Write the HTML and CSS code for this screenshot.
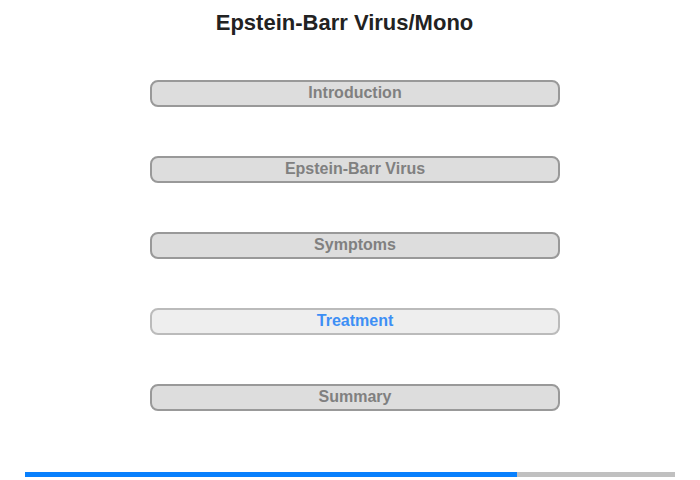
FILE: index.html
```html
<!DOCTYPE html>
<html>
<head>
<meta charset="utf-8">
<link rel="stylesheet" href="styles.css">
</head>
<body>
<div class="page">
  <h1 class="title">Epstein-Barr Virus/Mono</h1>
  <nav class="menu">
    <div class="item">Introduction</div>
    <div class="item">Epstein-Barr Virus</div>
    <div class="item">Symptoms</div>
    <div class="item active">Treatment</div>
    <div class="item">Summary</div>
  </nav>
  <div class="progress"><div class="fill" style="width:492px"></div></div>
</div>
</body>
</html>
```
FILE: styles.css
```css
html, body {
  margin: 0;
  padding: 0;
  background: #fff;
}
.page {
  width: 700px;
  height: 480px;
  display: flex;
  flex-direction: column;
  font-family: "Liberation Sans", Arial, sans-serif;
}
.title {
  margin: 0;
  padding: 10px 11px 0 0;
  font-size: 22px;
  line-height: 25px;
  font-weight: bold;
  color: #222;
  text-align: center;
}
.menu {
  margin: 45px 0 0 150px;
  width: 410px;
  display: flex;
  flex-direction: column;
  gap: 49px;
}
.item {
  box-sizing: border-box;
  height: 27px;
  border: 2px solid #999;
  border-radius: 8px;
  background: #ddd;
  color: #808080;
  font-size: 16px;
  font-weight: bold;
  line-height: 22px;
  text-align: center;
}
.item.active {
  border-color: #bbb;
  background: #eee;
  color: #3d8ff5;
}
.progress {
  margin: 61px 0 0 25px;
  width: 650px;
  height: 5px;
  background: #c0c0c0;
}
.fill {
  height: 100%;
  background: #0880fd;
}
```
